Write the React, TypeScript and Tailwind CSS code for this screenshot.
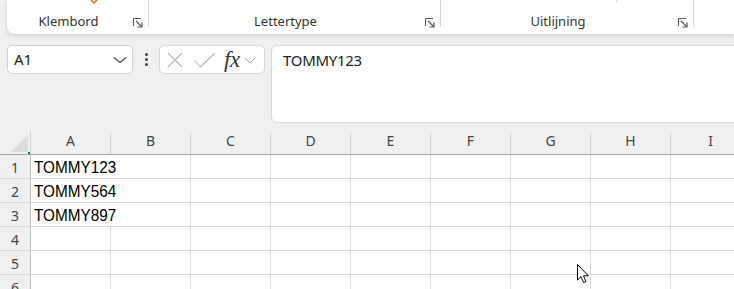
import React from "react";

const cols = ["A", "B", "C", "D", "E", "F", "G", "H", "I"];
const rows: string[][] = [["TOMMY123"], ["TOMMY564"], ["TOMMY897"], [], [], []];

function Launcher() {
  return (
    <svg width="10" height="10" viewBox="0 0 10 10" className="text-[#555]">
      <path d="M0.5 8 V0.5 H8" fill="none" stroke="currentColor" strokeWidth="1" />
      <path d="M3 3 L8.5 8.5" fill="none" stroke="currentColor" strokeWidth="1.2" />
      <path d="M4.5 9 H9 V4.5" fill="none" stroke="currentColor" strokeWidth="1.2" />
    </svg>
  );
}

function RibbonGroup({ label, width }: { label: string; width: number }) {
  return (
    <div className="flex shrink-0" style={{ width }}>
      <div className="flex-1 flex items-end justify-center pb-[4px] text-[13px] leading-[18px] text-[#333]">
        {label}
      </div>
      <div className="w-[18px] flex items-end pb-[6px] pl-[3px]">
        <Launcher />
      </div>
      <div className="w-px h-[27px] bg-[#d6d6d6]" />
    </div>
  );
}

export default function App() {
  return (
    <div className="relative w-[734px] h-[289px] overflow-hidden bg-[#f0f0f0] font-['Noto_Sans',sans-serif]">
      {/* ribbon */}
      <div className="relative ml-[7px] h-[34px] bg-white rounded-bl-[8px] shadow-[0_2px_4px_rgba(0,0,0,0.13)] flex">
        <RibbonGroup label="Klembord" width={142} />
        <RibbonGroup label="Lettertype" width={292} />
        <RibbonGroup label="Uitlijning" width={253} />
        <svg width="8" height="4" viewBox="0 0 8 4" className="absolute left-[83px] top-0">
          <path d="M1 0 L4 3 L7 0" fill="none" stroke="#e07a1f" strokeWidth="1.6" />
        </svg>
        <div className="absolute left-[609px] top-0 w-px h-[2px] bg-[#d6d6d6]" />
      </div>

      {/* formula bar */}
      <div className="mt-[11px] ml-[7px] flex items-start">
        <div className="w-[126px] h-[29px] shrink-0 bg-white border border-[#d2d2d2] rounded-[5px] flex items-center justify-between pl-[6px] pr-[5px]">
          <span className="text-[15px] text-[#222]">A1</span>
          <svg width="14" height="8" viewBox="0 0 14 8">
            <path d="M1 1.5 L7 6.5 L13 1.5" fill="none" stroke="#444" strokeWidth="1.2" />
          </svg>
        </div>
        <div className="w-[26px] h-[29px] shrink-0 flex flex-col items-center justify-center gap-[2px]">
          <div className="w-[3px] h-[3px] rounded-full bg-[#444]" />
          <div className="w-[3px] h-[3px] rounded-full bg-[#444]" />
          <div className="w-[3px] h-[3px] rounded-full bg-[#444]" />
        </div>
        <div className="w-[106px] h-[29px] shrink-0 bg-white border border-[#d8d8d8] rounded-[5px] flex items-center pl-[7px]">
          <svg width="16" height="16" viewBox="0 0 16 16" className="shrink-0">
            <path d="M1 1 L15 15 M15 1 L1 15" stroke="#b8b8b8" strokeWidth="1.1" />
          </svg>
          <svg width="21" height="15" viewBox="0 0 21 15" className="ml-[11px] mt-[1px] shrink-0">
            <path d="M0.5 7.5 L6.5 14 L20.5 0.5" fill="none" stroke="#b8b8b8" strokeWidth="1.1" />
          </svg>
          <span className="ml-[9px] font-['Liberation_Serif',serif] italic text-[23px] leading-none text-[#333] tracking-[-0.3px]">
            fx
          </span>
          <svg width="12" height="7" viewBox="0 0 12 7" className="ml-[4px] mt-[2px] shrink-0">
            <path d="M1 1 L6 6 L11 1" fill="none" stroke="#a8a8a8" strokeWidth="1" />
          </svg>
        </div>
        <div className="ml-[6px] w-[500px] h-[78px] shrink-0 bg-white border border-[#d8d8d8] rounded-[6px] pl-[11px] pt-[2px]">
          <span className="text-[15px] text-[#222] tracking-[-0.3px]">TOMMY123</span>
        </div>
      </div>

      {/* grid */}
      <div className="mt-[8px]">
        <div className="flex h-[24px] border-b border-[#a6a6a6]">
          <div className="w-[31px] shrink-0 relative border-r border-[#d4d4d4]">
            <svg width="17" height="17" viewBox="0 0 17 17" className="absolute left-[11px] top-[4px]">
              <path d="M17 0 L17 17 L0 17 Z" fill="#dcdcdc" />
            </svg>
            <div className="absolute right-0 bottom-0 w-[2px] h-[2px] bg-[#1e7145]" />
          </div>
          {cols.map((c) => (
            <div key={c} className="w-[80px] shrink-0 flex items-end justify-center pb-[4px] mt-[2px] border-r border-[#d4d4d4] text-[14px] leading-[18px] text-[#444]">
              {c}
            </div>
          ))}
        </div>
        {rows.map((r, i) => (
          <div key={i} className="flex h-[24px] border-b border-[#dadada]">
            <div className="w-[31px] shrink-0 flex items-center justify-center pt-[1px] border-r border-[#bdbdbd] text-[14px] text-[#444]">
              {i + 1}
            </div>
            {cols.map((c, j) => (
              <div key={c} className={"w-[80px] shrink-0 flex items-end pl-[3px] bg-white " + (j === 0 && r[0] ? "" : "border-r border-[#dadada]")}>
                {j === 0 && r[0] ? (
                  <span className="inline-block origin-left scale-x-[0.9] font-['Liberation_Sans',sans-serif] text-[17px] leading-[20px] text-black whitespace-nowrap">
                    {r[0]}
                  </span>
                ) : null}
              </div>
            ))}
          </div>
        ))}
      </div>

      {/* mouse pointer */}
      <svg width="13" height="20" viewBox="0 0 13 20" className="absolute left-[577px] top-[264px]">
        <path d="M0.5 0.5 L0.5 16 L4 12.7 L6.6 18.6 L9 17.6 L6.5 11.8 L11.3 11.8 Z" fill="#fff" stroke="#000" strokeWidth="1" strokeLinejoin="round" />
      </svg>
    </div>
  );
}
